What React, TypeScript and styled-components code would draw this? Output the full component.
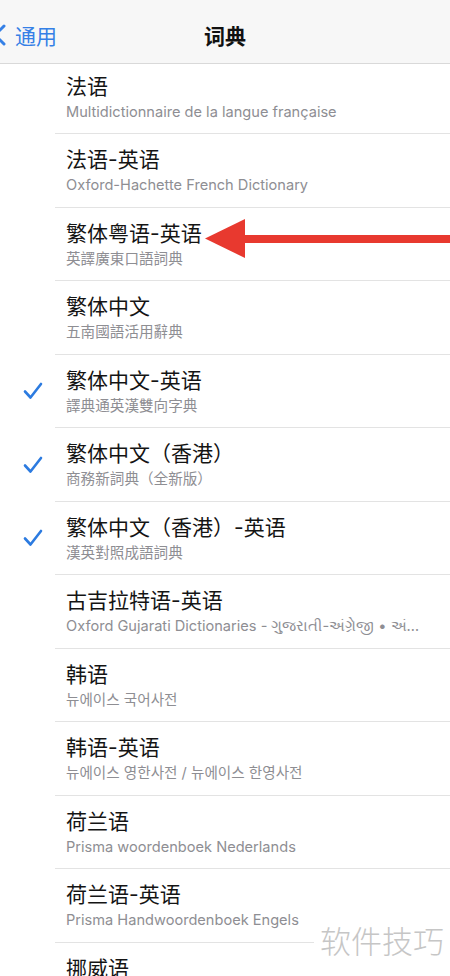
import React from 'react';
import styled, { createGlobalStyle } from 'styled-components';

const GlobalStyle = createGlobalStyle`
  body {
    margin: 0;
    background: #ffffff;
    font-family: Inter, "Noto Sans CJK SC", sans-serif;
  }
`;

const Screen = styled.div`
  position: relative;
  width: 450px;
  height: 976px;
  overflow: hidden;
  background: #ffffff;
`;

const NavBar = styled.header`
  height: 64px;
  display: grid;
  grid-template-columns: 1fr auto 1fr;
  align-items: center;
  background: #f7f7f7;
  border-bottom: 1px solid #d9d9d9;
  padding-top: 6px;
  box-sizing: border-box;
`;

const BackButton = styled.div`
  display: flex;
  align-items: center;
  gap: 9px;
  margin-left: -8px;
  color: #3580e6;
  font-family: "Noto Sans CJK SC", sans-serif;
  font-size: 21px;
`;

const Title = styled.h1`
  margin: 0;
  font-family: "Noto Sans CJK SC", sans-serif;
  font-size: 21px;
  font-weight: 700;
  color: #111111;
`;

const List = styled.div`
  overflow: hidden;
`;

const Scroller = styled.div`
  margin-top: -3.5px;
`;

const Row = styled.div`
  display: flex;
  height: 73.5px;
`;

const CheckCell = styled.div`
  width: 55px;
  flex: none;
  display: flex;
  align-items: center;
  padding-left: 23px;
  box-sizing: border-box;
`;

const Body = styled.div`
  flex: 1;
  min-width: 0;
  display: flex;
  flex-direction: column;
  gap: 1px;
  padding: 12px 20px 0 11px;
  border-bottom: 1px solid #e3e3e3;
`;

const Name = styled.div`
  font-family: Inter, "Noto Sans CJK SC", sans-serif;
  font-size: 21px;
  line-height: 28px;
  color: #141414;
  white-space: nowrap;
`;

const Detail = styled.div`
  font-family: Inter, "Noto Sans CJK SC", "Noto Sans CJK KR", sans-serif;
  font-size: 14.6px;
  line-height: 20px;
  color: #8e8e93;
  white-space: nowrap;
  overflow: hidden;
  text-overflow: ellipsis;
`;

const Arrow = styled.svg`
  position: absolute;
  left: 200px;
  top: 210px;
`;

const Watermark = styled.div`
  position: absolute;
  left: 314px;
  top: 920px;
  padding: 0 6px;
  background: #ffffff;
  font-family: "Noto Sans CJK SC", sans-serif;
  font-size: 31px;
  line-height: 40px;
  font-weight: 300;
  color: #c6c6c6;
  white-space: nowrap;
`;

const dictionaries = [
  { name: '法语', detail: 'Multidictionnaire de la langue française' },
  { name: '法语-英语', detail: 'Oxford-Hachette French Dictionary' },
  { name: '繁体粤语-英语', detail: '英譯廣東口語詞典' },
  { name: '繁体中文', detail: '五南國語活用辭典' },
  { name: '繁体中文-英语', detail: '譯典通英漢雙向字典', checked: true },
  { name: '繁体中文（香港）', detail: '商務新詞典（全新版）', checked: true },
  { name: '繁体中文（香港）-英语', detail: '漢英對照成語詞典', checked: true },
  {
    name: '古吉拉特语-英语',
    detail: 'Oxford Gujarati Dictionaries - ગુજરાતી-અંગ્રેજી • અંગ્રેજી-ગુજરાતી',
  },
  { name: '韩语', detail: '뉴에이스 국어사전' },
  { name: '韩语-英语', detail: '뉴에이스 영한사전 / 뉴에이스 한영사전' },
  { name: '荷兰语', detail: 'Prisma woordenboek Nederlands' },
  { name: '荷兰语-英语', detail: 'Prisma Handwoordenboek Engels' },
  { name: '挪威语', detail: 'Stor norsk ordbok' },
];

const Check = () => (
  <svg width="20" height="18" viewBox="0 0 20 18">
    <path d="M2 9.5 L7.5 15.5 L18 2" fill="none" stroke="#2c7be0" strokeWidth="2.6" strokeLinecap="round" strokeLinejoin="round" />
  </svg>
);

export default function App() {
  return (
    <Screen>
      <GlobalStyle />
      <NavBar>
        <BackButton>
          <svg width="14" height="22" viewBox="0 0 14 22">
            <path d="M12 2 L3 11 L12 20" fill="none" stroke="#3580e6" strokeWidth="3" strokeLinecap="round" strokeLinejoin="round" />
          </svg>
          通用
        </BackButton>
        <Title>词典</Title>
        <div />
      </NavBar>
      <List>
        <Scroller>
          {dictionaries.map((d) => (
            <Row key={d.name}>
              <CheckCell>{d.checked && <Check />}</CheckCell>
              <Body>
                <Name>{d.name}</Name>
                <Detail>{d.detail}</Detail>
              </Body>
            </Row>
          ))}
        </Scroller>
      </List>
      <Arrow width="250" height="60" viewBox="0 0 250 60">
        <rect x="40" y="25" width="210" height="8" fill="#e8392f" />
        <polygon points="5,28.5 45,9 45,48" fill="#e8392f" />
      </Arrow>
      <Watermark>软件技巧</Watermark>
    </Screen>
  );
}
